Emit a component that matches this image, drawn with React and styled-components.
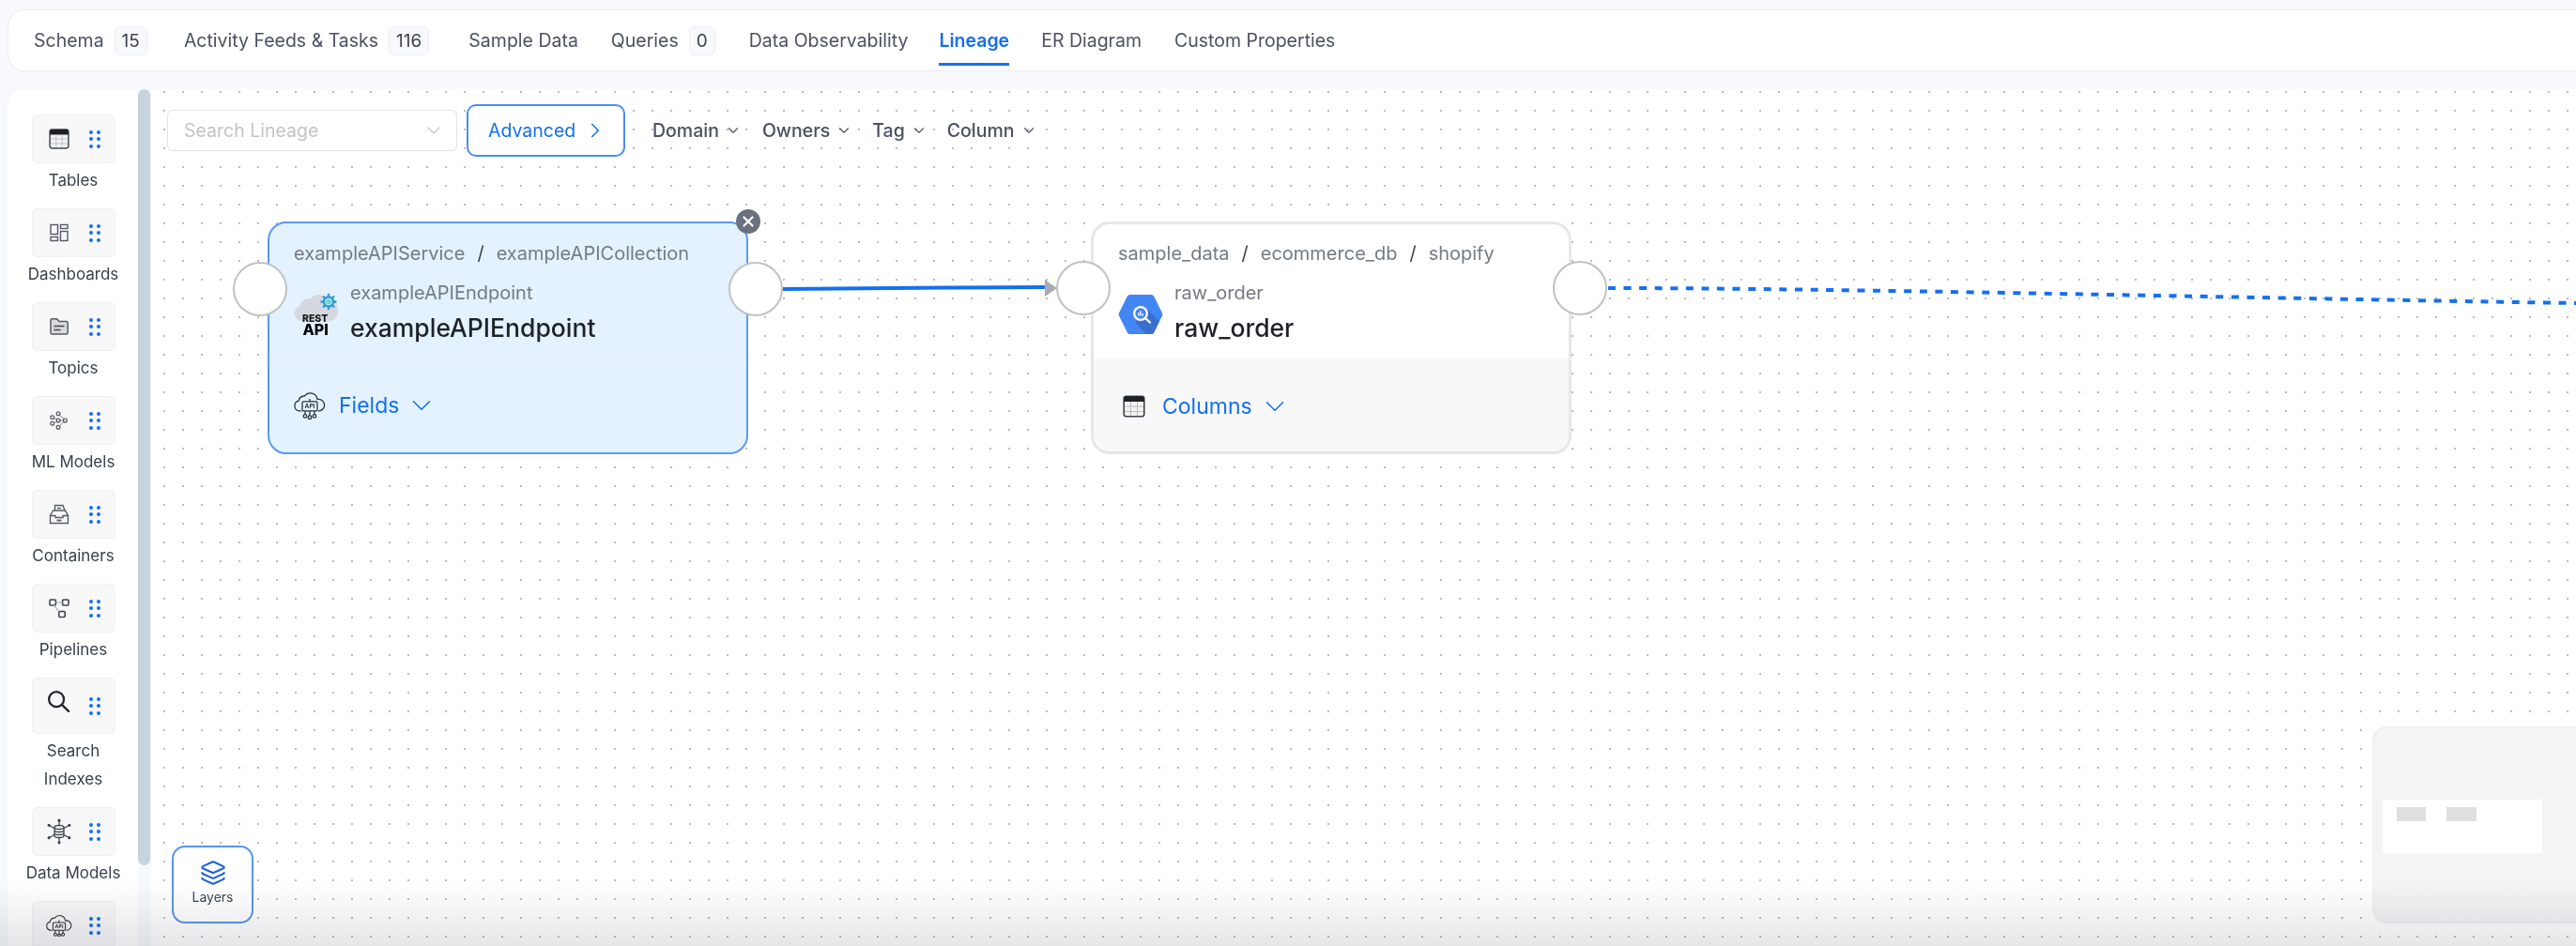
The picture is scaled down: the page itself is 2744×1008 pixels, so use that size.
import React from "react";
import styled, { createGlobalStyle } from "styled-components";
import { ChevronDown, ChevronRight, X, Layers as LayersGlyph } from "lucide-react";

const GlobalStyle = createGlobalStyle`
  html, body {
    margin: 0;
    padding: 0;
    width: 2744px;
    height: 1008px;
    overflow: hidden;
    background: #f8f9fc;
    font-family: Inter, "Noto Sans", sans-serif;
  }
`;

const BLUE = "#1470ef";

const Page = styled.div`
  position: relative;
  width: 2744px;
  height: 1008px;
  overflow: hidden;
  padding: 10px 0 0 8px;
  box-sizing: border-box;
  display: flex;
  flex-direction: column;
  gap: 19px;
`;

const TabBar = styled.div`
  height: 66px;
  flex: none;
  background: #fff;
  border: 1px solid #eceef5;
  border-right: none;
  border-radius: 18px 0 0 18px;
  box-sizing: border-box;
  display: flex;
  padding-left: 27px;
`;

const Tab = styled.div`
  position: relative;
  height: 64px;
  margin-right: ${(p) => p.$gap}px;
  display: flex;
  align-items: center;
  gap: 11px;
  font-size: 19.5px;
  font-weight: ${(p) => (p.$active ? 600 : 400)};
  color: ${(p) => (p.$active ? BLUE : "#4b5162")};

  ${(p) =>
    p.$active &&
    `
    &::after {
      content: "";
      position: absolute;
      left: 0;
      right: 0;
      bottom: 5px;
      height: 3px;
      background: ${BLUE};
    }
  `}
`;

const Badge = styled.span`
  height: 29px;
  padding: 0 7px;
  display: flex;
  align-items: center;
  background: #f8f9fc;
  border: 1px solid #eceef5;
  border-radius: 6px;
  font-size: 19px;
  color: #3d4352;
`;

const Body = styled.div`
  flex: 1;
  display: flex;
  min-height: 0;
`;

const Sidebar = styled.aside`
  width: 139px;
  flex: none;
  background: #fff;
  border-radius: 18px 0 0 0;
  padding-top: 27px;
  box-sizing: border-box;
  display: flex;
  flex-direction: column;
  align-items: center;
  overflow: hidden;
`;

const Item = styled.div`
  width: 139px;
  flex: none;
  margin-bottom: 15px;
  display: flex;
  flex-direction: column;
  align-items: center;
  gap: 3px;
  padding-left: 1px;
  box-sizing: border-box;
`;

const Tile = styled.div`
  width: 89px;
  height: ${(p) => (p.$tall ? 60 : 52)}px;
  background: #f8f8f9;
  border: 1px solid #eff0f5;
  border-radius: 6px;
  box-sizing: border-box;
  display: flex;
  align-items: center;
  padding-left: 14px;
  gap: 18px;
`;

const TileIcon = styled.div`
  width: 28px;
  height: 28px;
  margin-top: ${(p) => (p.$tall ? -10 : 0)}px;
  display: flex;
  align-items: center;
  justify-content: center;
  color: #555b66;
`;

const Grip = styled.div`
  display: grid;
  grid-template-columns: repeat(2, 4px);
  grid-auto-rows: 4px;
  column-gap: 4px;
  row-gap: 3.5px;

  i {
    background: ${BLUE};
    border-radius: 50%;
  }
`;

const ItemLabel = styled.div`
  width: 110px;
  text-align: center;
  font-size: 17px;
  line-height: 30px;
  color: #37404d;
`;

const Scrollbar = styled.div`
  width: 13px;
  height: 827px;
  flex: none;
  background: #c6d4de;
  border-radius: 7px;
`;

const Canvas = styled.main`
  position: relative;
  flex: 1;
  margin-left: 1px;
  background-color: #fff;
  background-image: radial-gradient(circle, #bcbcbc 0.9px, transparent 1.1px);
  background-size: 20px 20px;
  background-position: 4px 13px;
  overflow: hidden;
`;

const Toolbar = styled.div`
  display: flex;
  align-items: center;
  padding: 16px 0 0 17px;
`;

const SearchSelect = styled.div`
  width: 309px;
  height: 44px;
  background: #fff;
  border: 1.5px solid #e2e2e2;
  border-radius: 6px;
  box-sizing: border-box;
  display: flex;
  align-items: center;
  justify-content: space-between;
  padding: 0 12px 0 17px;
  font-size: 19.5px;
  color: #c4c4c4;
`;

const AdvancedButton = styled.button`
  width: 169px;
  height: 56px;
  margin: 0 29px 0 10px;
  background: #fff;
  border: 2px solid #4b8df0;
  border-radius: 10px;
  box-sizing: border-box;
  display: flex;
  align-items: center;
  gap: 8px;
  padding: 0 0 0 21px;
  font: 400 19.5px Inter, sans-serif;
  color: ${BLUE};
`;

const Filter = styled.div`
  display: flex;
  align-items: center;
  gap: 6px;
  margin-right: ${(p) => p.$gap}px;
  font-size: 19.5px;
  font-weight: 500;
  color: #4b5162;
`;

const Node = styled.div`
  position: absolute;
  left: ${(p) => p.$x}px;
  top: ${(p) => p.$y}px;
  width: 512px;
  height: 248px;
  box-sizing: border-box;
  border: ${(p) => (p.$selected ? "2px solid #5a9af2" : "3px solid #e7e7e8")};
  border-radius: 20px;
  background: ${(p) => (p.$selected ? "#e3f2fe" : "#fff")};
  display: flex;
  flex-direction: column;
`;

const NodeHead = styled.div`
  height: ${(p) => (p.$selected ? 144 : 142)}px;
  flex: none;
  box-sizing: border-box;
  padding: ${(p) => (p.$selected ? 17 : 16)}px 0 0 26px;
  border-bottom: ${(p) => (p.$selected ? "1px solid #e8edf6" : "none")};
`;

const Crumbs = styled.div`
  display: flex;
  align-items: center;
  gap: 13px;
  height: 30px;
  font-size: 20px;
  color: #757b83;

  b {
    font-weight: 400;
    color: #3b3f46;
  }
`;

const NameRow = styled.div`
  display: flex;
  align-items: center;
  margin-top: 13px;
  gap: ${(p) => p.$gap}px;
`;

const Names = styled.div`
  display: flex;
  flex-direction: column;
`;

const SmallName = styled.div`
  font-size: 20px;
  line-height: 28px;
  color: #757b83;
`;

const BigName = styled.div`
  font-size: 26.5px;
  line-height: 46px;
  font-weight: 500;
  color: #1f2329;
`;

const NodeFoot = styled.div`
  flex: 1;
  display: flex;
  align-items: center;
  gap: ${(p) => p.$gap}px;
  padding-left: ${(p) => p.$pad}px;
  padding-top: ${(p) => (p.$selected ? 0 : 3)}px;
  background: ${(p) => (p.$selected ? "transparent" : "#f8f8f8")};
  border-radius: 0 0 17px 17px;
  font-size: 23px;
  color: ${BLUE};
`;

const FootToggle = styled.span`
  display: flex;
  align-items: center;
  gap: 7px;
`;

const Handle = styled.div`
  position: absolute;
  left: ${(p) => p.$x}px;
  top: ${(p) => p.$y}px;
  width: 58px;
  height: 58px;
  background: #fff;
  border: 2px solid #c2c2c2;
  border-radius: 50%;
  box-sizing: border-box;
`;

const CloseBadge = styled.div`
  position: absolute;
  left: 623px;
  top: 128px;
  width: 26px;
  height: 26px;
  background: #6a7280;
  border-radius: 50%;
  display: flex;
  align-items: center;
  justify-content: center;
  color: #fff;
`;

const Edges = styled.svg`
  position: absolute;
  left: 0;
  top: 0;
  width: 100%;
  height: 100%;
  pointer-events: none;
`;

const LayersButton = styled.div`
  position: absolute;
  left: 22px;
  top: 806px;
  width: 87px;
  height: 83px;
  background: #fff;
  border: 2px solid #5a94ee;
  border-radius: 14px;
  box-sizing: border-box;
  display: flex;
  flex-direction: column;
  align-items: center;
  padding-top: 13px;
  gap: 3px;
  font-size: 14px;
  color: #3d4754;
`;

const MiniMap = styled.svg`
  position: absolute;
  right: 0;
  top: 679px;
  width: 217px;
  height: 210px;
  display: block;
`;

const BottomFade = styled.div`
  position: absolute;
  left: 0;
  right: 0;
  bottom: 0;
  height: 68px;
  background: linear-gradient(to bottom, #fff, #e6e6e9);
  mix-blend-mode: multiply;
  pointer-events: none;
`;

const TableIcon = ({ size = 24 }) => (
  <svg width={size} height={size} viewBox="0 0 24 24">
    <rect x="1.2" y="1.2" width="21.6" height="21.6" rx="2.5" fill="#f3f3f3" stroke="#3f4550" strokeWidth="1.6" />
    <path d="M1.2 7V3.7a2.5 2.5 0 0 1 2.5-2.5h16.6a2.5 2.5 0 0 1 2.5 2.5V7z" fill="#1d2026" />
    <path d="M2 12h20M2 17.5h20M8.5 7v15M15.5 7v15" stroke="#b9bcc2" strokeWidth="1" fill="none" />
  </svg>
);

const DashboardIcon = () => (
  <svg width="20" height="20" viewBox="0 0 20 20" fill="none" stroke="#555b66" strokeWidth="1.4">
    <rect x="1" y="1.5" width="7.5" height="10" />
    <rect x="11.5" y="1.5" width="7.5" height="4" />
    <rect x="1" y="14.5" width="7.5" height="4" />
    <rect x="11.5" y="8.5" width="7.5" height="10" />
  </svg>
);

const TopicIcon = () => (
  <svg width="22" height="20" viewBox="0 0 22 20" fill="none">
    <path d="M2 3.2a1.5 1.5 0 0 1 1.5-1.5h5.2L11 4.4h7.6a1.6 1.6 0 0 1 1.6 1.6v10.5a1.6 1.6 0 0 1-1.6 1.6H3.6A1.6 1.6 0 0 1 2 16.5z" fill="#d9dadd" stroke="#555b66" strokeWidth="1.5" />
    <path d="M5.5 9.5h11M5.5 13.5h7" stroke="#3f4550" strokeWidth="1.5" />
  </svg>
);

const MlIcon = () => (
  <svg width="20" height="20" viewBox="0 0 22 22" fill="none" stroke="#555b66" strokeWidth="1.4">
    <circle cx="3" cy="7.5" r="2.1" />
    <circle cx="3" cy="14.5" r="2.1" />
    <circle cx="10" cy="3" r="2.1" />
    <circle cx="10" cy="11" r="2.1" />
    <circle cx="10" cy="19" r="2.1" />
    <circle cx="18" cy="11" r="2.1" />
    <path d="M12 11h4M5 7.8l3 2M5 14.2l3-2M11.5 4.8l5 4.5M11.5 17.2l5-4.5" strokeWidth="0.8" />
  </svg>
);

const ContainerIcon = () => (
  <svg width="22" height="22" viewBox="0 0 22 22" fill="none" stroke="#555b66" strokeWidth="1.4">
    <path d="M1.5 12.5L4.5 7h13l3 5.5V20.5h-19z" />
    <path d="M1.5 12.5H7v2h8v-2h5.5" />
    <path d="M6.5 7V1.5H15l2 5.5M9 4.5h4" />
    <path d="M8.5 17.5h5" strokeWidth="1.8" />
  </svg>
);

const PipelineIcon = () => (
  <svg width="22" height="22" viewBox="0 0 22 22" fill="none" stroke="#3f4550" strokeWidth="1.6">
    <rect x="1" y="2" width="6.4" height="6" rx="1" />
    <rect x="14.6" y="2" width="6.4" height="6" rx="1" />
    <rect x="10.8" y="14.5" width="6.4" height="6" rx="1" />
    <path d="M7.4 5h7.2M5.5 8l5.3 7" stroke="#a4a7ad" strokeWidth="1.1" />
  </svg>
);

const SearchIcon = () => (
  <svg width="25" height="25" viewBox="0 0 26 26" fill="none" stroke="#23272e" strokeWidth="2.4" strokeLinecap="round">
    <circle cx="10.5" cy="10.5" r="8.3" />
    <path d="M16.8 16.8l7.2 7" />
  </svg>
);

const DataModelIcon = () => (
  <svg width="26" height="28" viewBox="0 0 26 28" fill="none" stroke="#3f4550" strokeWidth="1.3">
    <ellipse cx="13" cy="9.5" rx="5" ry="2" />
    <path d="M8 9.5v9c0 1.1 2.2 2 5 2s5-.9 5-2v-9M8 12.5c0 1.1 2.2 2 5 2s5-.9 5-2M8 15.5c0 1.1 2.2 2 5 2s5-.9 5-2" />
    <path d="M13 7.5V2.5M13 20.5v5M8 10.5L2.5 7.5M18 10.5l5.5-3M8 17.5l-5.5 3M18 17.5l5.5 3" />
    <g fill="#3f4550" stroke="none">
      <circle cx="13" cy="2.2" r="1.6" />
      <circle cx="13" cy="25.8" r="1.6" />
      <circle cx="2.2" cy="7.3" r="1.6" />
      <circle cx="23.8" cy="7.3" r="1.6" />
      <circle cx="2.2" cy="20.7" r="1.6" />
      <circle cx="23.8" cy="20.7" r="1.6" />
    </g>
  </svg>
);

const ApiCloudIcon = ({ size = 34 }) => (
  <svg width={size} height={size * 0.88} viewBox="0 0 34 30" fill="none" stroke="#2d3138" strokeWidth="1.3">
    <path d="M8 21H6a5.5 5.5 0 0 1-1-10.8A6.5 6.5 0 0 1 11.5 5 7.5 7.5 0 0 1 25 8.5 6.3 6.3 0 0 1 27.5 21H26" />
    <rect x="9" y="11" width="16" height="10" rx="1.2" />
    <path d="M12 24.5V21M17 26v-5M22 24.5V21M17 8v3" />
    <circle cx="12" cy="26.5" r="1.8" />
    <circle cx="17" cy="27.8" r="1.8" />
    <circle cx="22" cy="26.5" r="1.8" />
    <text x="17" y="18.5" textAnchor="middle" fontSize="6.5" fontWeight="700" fill="#2d3138" stroke="none" fontFamily="Inter, sans-serif">API</text>
  </svg>
);

const RestApiIcon = () => (
  <svg width="48" height="46" viewBox="0 0 48 46" fill="none">
    <path d="M8 30a8 8 0 0 1-2-15.500C7 9 12 5 18 6.500 21 1.500 30 0 34 6a9 9 0 0 1 12 8c2.500 6 0 16-8 16z" fill="#d5d9df" />
    <circle cx="37" cy="9.5" r="6.2" fill="#2d9bd8" />
    <circle cx="37" cy="9.5" r="3.4" fill="#6fd0cf" stroke="#d5eef5" strokeWidth="1" />
    <path d="M37 0.8v3M37 15v3M28.5 9.5h3M42.5 9.5h3M31 3.5l2 2M41 13.5l2 2M31 15.5l2-2M41 5.5l2-2" stroke="#2d9bd8" strokeWidth="2.4" />
    <text x="9" y="31" fontSize="10.5" fontWeight="800" fill="#15171a" fontFamily="Inter, sans-serif">REST</text>
    <text x="9.5" y="45" fontSize="16" fontWeight="800" fill="#000" fontFamily="Inter, sans-serif">API</text>
  </svg>
);

const hexPath = "M12.5 1h23a3 3 0 0 1 2.6 1.5L47 20.5a3 3 0 0 1 0 3L38.1 41.5a3 3 0 0 1-2.6 1.5h-23a3 3 0 0 1-2.6-1.5L1 23.5a3 3 0 0 1 0-3L9.9 2.5A3 3 0 0 1 12.5 1z";

const BigQueryIcon = () => (
  <svg width="48" height="44" viewBox="0 0 48 44">
    <clipPath id="hex-clip">
      <path d={hexPath} />
    </clipPath>
    <path d={hexPath} fill="#4285f4" />
    <path d="M29 14L52 38 36 50 18 30z" fill="#3a6fd0" clipPath="url(#hex-clip)" />
    <circle cx="24" cy="21" r="8" fill="#fff" />
    <circle cx="24" cy="21" r="5.7" fill="#4285f4" />
    <path d="M21.8 20v3.5M24 18v5.5M26.2 21v2.5" stroke="#fff" strokeWidth="1.3" />
    <path d="M29.5 26.5l4.5 4" stroke="#fff" strokeWidth="2.2" strokeLinecap="round" />
  </svg>
);

const tabs = [
  { name: "Schema", badge: 15, gap: 39 },
  { name: "Activity Feeds & Tasks", badge: 116, gap: 42 },
  { name: "Sample Data", gap: 35 },
  { name: "Queries", badge: 0, gap: 36 },
  { name: "Data Observability", gap: 33 },
  { name: "Lineage", active: true, gap: 34 },
  { name: "ER Diagram", gap: 35 },
  { name: "Custom Properties", gap: 0 },
];

const items = [
  { label: "Tables", icon: <TableIcon size={22} /> },
  { label: "Dashboards", icon: <DashboardIcon /> },
  { label: "Topics", icon: <TopicIcon /> },
  { label: "ML Models", icon: <MlIcon /> },
  { label: "Containers", icon: <ContainerIcon /> },
  { label: "Pipelines", icon: <PipelineIcon /> },
  { label: "Search Indexes", icon: <SearchIcon />, tall: true },
  { label: "Data Models", icon: <DataModelIcon /> },
  { label: "APIs", icon: <ApiCloudIcon size={28} /> },
];

const filters = [
  { name: "Domain", gap: 22 },
  { name: "Owners", gap: 21 },
  { name: "Tag", gap: 21 },
  { name: "Column", gap: 0 },
];

const Chevron = (props) => <ChevronDown strokeWidth={1.5} {...props} />;

export default function App() {
  return (
    <>
      <GlobalStyle />
      <Page>
        <TabBar>
          {tabs.map((t) => (
            <Tab key={t.name} $active={t.active} $gap={t.gap}>
              {t.name}
              {t.badge !== undefined && <Badge>{t.badge}</Badge>}
            </Tab>
          ))}
        </TabBar>
        <Body>
          <Sidebar>
            {items.map((it) => (
              <Item key={it.label}>
                <Tile $tall={it.tall}>
                  <TileIcon $tall={it.tall}>{it.icon}</TileIcon>
                  <Grip>
                    {[0, 1, 2, 3, 4, 5].map((i) => (
                      <i key={i} />
                    ))}
                  </Grip>
                </Tile>
                <ItemLabel>{it.label}</ItemLabel>
              </Item>
            ))}
          </Sidebar>
          <Scrollbar />
          <Canvas>
            <Edges>
              <path d="M673 213C800 212 850 211 952 211" stroke={BLUE} strokeWidth="4" fill="none" />
              <path d="M952 203L965 212L952 221z" fill="#a9acb2" />
              <path
                d="M1552 212C1800 212 2200 222 2584 228"
                stroke={BLUE}
                strokeWidth="4"
                strokeDasharray="8 8.6"
                fill="none"
              />
            </Edges>
            <Toolbar>
              <SearchSelect>
                Search Lineage
                <Chevron size={24} color="#c4c4c4" strokeWidth={1.1} />
              </SearchSelect>
              <AdvancedButton>
                Advanced
                <ChevronRight size={26} strokeWidth={1.4} />
              </AdvancedButton>
              {filters.map((f) => (
                <Filter key={f.name} $gap={f.gap}>
                  {f.name}
                  <Chevron size={18} color="#4b5162" />
                </Filter>
              ))}
            </Toolbar>

            <Node $x={124} $y={141} $selected>
              <NodeHead $selected>
                <Crumbs>
                  exampleAPIService <b>/</b> exampleAPICollection
                </Crumbs>
                <NameRow $gap={12}>
                  <RestApiIcon />
                  <Names>
                    <SmallName>exampleAPIEndpoint</SmallName>
                    <BigName>exampleAPIEndpoint</BigName>
                  </Names>
                </NameRow>
              </NodeHead>
              <NodeFoot $selected $pad={26} $gap={14}>
                <ApiCloudIcon />
                <FootToggle>
                  Fields
                  <Chevron size={34} strokeWidth={1.1} />
                </FootToggle>
              </NodeFoot>
            </Node>
            <Handle $x={87} $y={184} />
            <Handle $x={615} $y={184} />
            <CloseBadge>
              <X size={18} strokeWidth={3} />
            </CloseBadge>

            <Node $x={1001} $y={141}>
              <NodeHead>
                <Crumbs>
                  sample_data <b>/</b> ecommerce_db <b>/</b> shopify
                </Crumbs>
                <NameRow $gap={12}>
                  <BigQueryIcon />
                  <Names>
                    <SmallName>raw_order</SmallName>
                    <BigName>raw_order</BigName>
                  </Names>
                </NameRow>
              </NodeHead>
              <NodeFoot $pad={31} $gap={18}>
                <TableIcon size={24} />
                <FootToggle>
                  Columns
                  <Chevron size={34} strokeWidth={1.1} />
                </FootToggle>
              </NodeFoot>
            </Node>
            <Handle $x={964} $y={183} />
            <Handle $x={1493} $y={183} />

            <LayersButton>
              <LayersGlyph size={28} color="#1f63d8" strokeWidth={1.8} />
              Layers
            </LayersButton>

            <MiniMap viewBox="0 0 217 210">
              <rect x="1" y="1" width="230" height="208" rx="14" fill="#f4f4f5" stroke="#eceef4" strokeWidth="1.5" />
              <rect x="11" y="78" width="170" height="57" fill="#fff" />
              <rect x="26" y="86" width="31" height="15" fill="#e0e0e0" />
              <rect x="79" y="86" width="32" height="15" fill="#e0e0e0" />
            </MiniMap>
          </Canvas>
        </Body>
        <BottomFade />
      </Page>
    </>
  );
}
